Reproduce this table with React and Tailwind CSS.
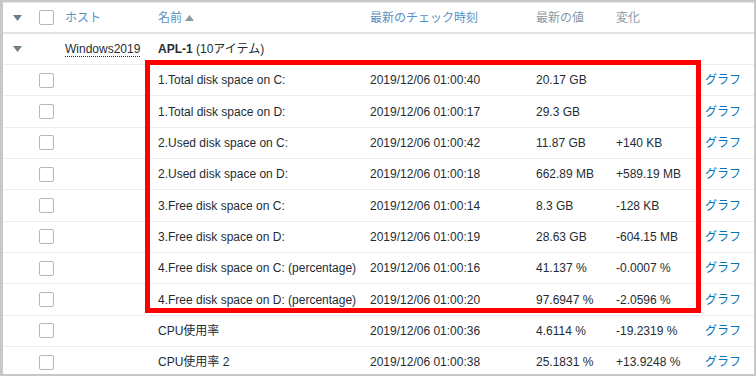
import React from "react";

const rows = [
  ["1.Total disk space on C:", "2019/12/06 01:00:40", "20.17 GB", ""],
  ["1.Total disk space on D:", "2019/12/06 01:00:17", "29.3 GB", ""],
  ["2.Used disk space on C:", "2019/12/06 01:00:42", "11.87 GB", "+140 KB"],
  ["2.Used disk space on D:", "2019/12/06 01:00:18", "662.89 MB", "+589.19 MB"],
  ["3.Free disk space on C:", "2019/12/06 01:00:14", "8.3 GB", "-128 KB"],
  ["3.Free disk space on D:", "2019/12/06 01:00:19", "28.63 GB", "-604.15 MB"],
  ["4.Free disk space on C: (percentage)", "2019/12/06 01:00:16", "41.137 %", "-0.0007 %"],
  ["4.Free disk space on D: (percentage)", "2019/12/06 01:00:20", "97.6947 %", "-2.0596 %"],
  ["CPU使用率", "2019/12/06 01:00:36", "4.6114 %", "-19.2319 %"],
  ["CPU使用率 2", "2019/12/06 01:00:38", "25.1831 %", "+13.9248 %"],
];

const grid = "grid grid-cols-[36px_26px_93px_212px_166px_80px_89px_1fr] items-center";

function Tri() {
  return (
    <svg width="9" height="6" viewBox="0 0 9 6" className="ml-[10px]">
      <path d="M0 0 L9 0 L4.5 6 Z" fill="#6c7d89" />
    </svg>
  );
}

function Box() {
  return <div className="w-[15px] h-[15px] border border-[#acbbc2] rounded-[2px] bg-white" />;
}

export default function App() {
  return (
    <div
      className="relative w-[756px] h-[376px] overflow-hidden bg-white border-l-[3px] border-t-2 border-r-2 border-b-2 border-[#c6c8ca] text-[12px] text-[#1f2c33]"
      style={{ fontFamily: '"Liberation Sans", "Noto Sans CJK JP", sans-serif' }}
    >
      <div className="border-t border-[#e4e8eb]">
        <div className={`${grid} h-[31px] border-b-2 border-[#dfe4e7]`}>
          <div className="flex items-center"><Tri /></div>
          <div><Box /></div>
          <div className="text-[#5b8fbf]">ホスト</div>
          <div className="text-[#5b8fbf] flex items-center gap-[3px]">
            名前
            <svg width="9" height="6" viewBox="0 0 9 6">
              <path d="M0 6 L9 6 L4.5 0 Z" fill="#8c9aa4" />
            </svg>
          </div>
          <div className="text-[#5b8fbf]">最新のチェック時刻</div>
          <div className="text-[#8c9aa4]">最新の値</div>
          <div className="text-[#8c9aa4]">変化</div>
          <div></div>
        </div>
        <div className={`${grid} h-[31px] border-b border-[#ebeef0]`}>
          <div className="flex items-center"><Tri /></div>
          <div></div>
          <div className="h-full flex items-center">
            <span className="border-b border-dotted border-[#1f2c33] leading-[14px]">Windows2019</span>
          </div>
          <div><span className="font-bold">APL-1</span> (10アイテム)</div>
          <div></div>
          <div></div>
          <div></div>
          <div></div>
        </div>
        {rows.map((r, i) => (
          <div key={i} className={`${grid} h-[31.35px] border-b border-[#ebeef0]`}>
            <div></div>
            <div><Box /></div>
            <div></div>
            <div className="whitespace-nowrap">{r[0]}</div>
            <div className="whitespace-nowrap">{r[1]}</div>
            <div className="whitespace-nowrap">{r[2]}</div>
            <div className="whitespace-nowrap">{r[3]}</div>
            <div className="text-[#0275b8]">グラフ</div>
          </div>
        ))}
      </div>
      <div className="absolute left-[142px] top-[58px] w-[556px] h-[253px] border-[5px] border-[#ff0000]" />
    </div>
  );
}
